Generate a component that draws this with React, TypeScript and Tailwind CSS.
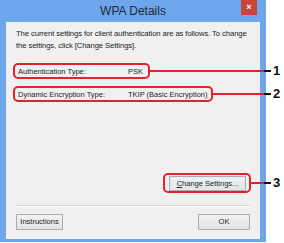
import React from "react";

const font = { fontFamily: '"Liberation Sans", Arial, sans-serif' };

function Btn({ children, className }: { children: React.ReactNode; className: string }) {
  return (
    <div
      className={`flex items-center justify-center border border-[#adadad] bg-gradient-to-b from-[#f2f2f2] to-[#e3e3e3] text-[7.5px] text-[#222] whitespace-nowrap ${className}`}
    >
      {children}
    </div>
  );
}

export default function App() {
  return (
    <div className="relative w-[284px] h-[243px] bg-white overflow-hidden" style={font}>
      {/* window */}
      <div className="w-[266px] h-[242px] bg-[#6da6ea] flex flex-col">
        <div className="h-[22px] flex items-center justify-center relative">
          <span className="text-[12px] text-[#1d2a3a]">WPA Details</span>
          <div className="absolute left-[241px] top-0 w-[16px] h-[15px] bg-[#c7463c] flex items-center justify-center text-white text-[9px] font-bold">
            ×
          </div>
        </div>
        <div className="flex-1 mx-[6px] mb-[3px] bg-[#f0f0f0] flex flex-col px-[10px] pt-[6px] text-[#1c1c1c]">
          <p className="text-[7.7px] leading-[12px] whitespace-nowrap tracking-[-0.1px]">
            The current settings for client authentication are as follows. To change
            <br />
            the settings, click [Change Settings].
          </p>
          <div className="mt-[12px] flex text-[7.5px] h-[16px] items-center pl-[2px] whitespace-nowrap">
            <span className="w-[110px]">Authentication Type:</span>
            <span>PSK</span>
          </div>
          <div className="mt-[7px] flex text-[7.5px] h-[16px] items-center pl-[2px] whitespace-nowrap">
            <span className="w-[110px]">Dynamic Encryption Type:</span>
            <span>TKIP (Basic Encryption)</span>
          </div>
          <div className="flex-1" />
          <div className="flex justify-end pr-[4px]">
            <Btn className="w-[77px] h-[15px] border-[#7eb4ea] shadow-[inset_0_0_0_1px_#dcecfc]">
              <span>
                <span className="underline">C</span>hange Settings...
              </span>
            </Btn>
          </div>
          <div className="mt-[14px] border-t border-[#d5d5d5] border-b border-b-white" />
          <div className="mt-[7px] mb-[9px] flex justify-between">
            <Btn className="w-[47px] h-[16px]">Instructions</Btn>
            <Btn className="w-[52px] h-[16px]">OK</Btn>
          </div>
        </div>
      </div>

      {/* annotations */}
      <div className="absolute left-[13px] top-[63px] w-[137px] h-[16px] border-2 border-[#e3232c] rounded-[5px]" />
      <div className="absolute left-[150px] top-[70px] w-[114px] h-[2px] bg-[#e3232c]" />
      <div className="absolute left-[264px] top-[70px] w-[7px] h-[2px] bg-[#111]" />
      <div className="absolute left-[273px] top-[63px] text-[13px] font-bold leading-[16px] text-[#111]">1</div>

      <div className="absolute left-[13px] top-[86px] w-[200px] h-[16px] border-2 border-[#e3232c] rounded-[5px]" />
      <div className="absolute left-[213px] top-[93px] w-[51px] h-[2px] bg-[#e3232c]" />
      <div className="absolute left-[264px] top-[93px] w-[7px] h-[2px] bg-[#111]" />
      <div className="absolute left-[273px] top-[86px] text-[13px] font-bold leading-[16px] text-[#111]">2</div>

      <div className="absolute left-[163px] top-[173px] w-[88px] h-[20px] border-2 border-[#e3232c] rounded-[5px]" />
      <div className="absolute left-[251px] top-[182px] w-[13px] h-[2px] bg-[#e3232c]" />
      <div className="absolute left-[264px] top-[182px] w-[7px] h-[2px] bg-[#111]" />
      <div className="absolute left-[273px] top-[175px] text-[13px] font-bold leading-[16px] text-[#111]">3</div>
    </div>
  );
}
